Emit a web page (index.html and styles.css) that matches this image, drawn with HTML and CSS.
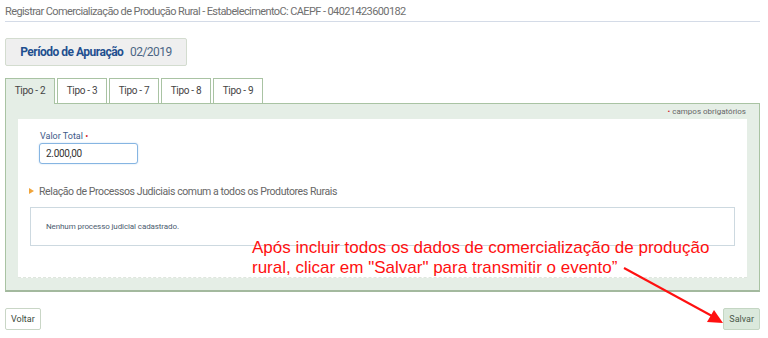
FILE: index.html
```html
<!DOCTYPE html>
<html lang="pt-BR">
<head>
  <meta charset="UTF-8">
  <title>Registrar Comercialização de Produção Rural</title>
  <link rel="stylesheet" href="styles.css">
</head>
<body>
  <div class="page">
    <div class="page-title">Registrar Comercialização de Produção Rural - EstabelecimentoC: CAEPF - 04021423600182</div>

    <div class="periodo">
      <span class="periodo-label">Período de Apuração</span>
      <span class="periodo-valor">02/2019</span>
    </div>

    <ul class="tabs">
      <li class="tab active">Tipo - 2</li>
      <li class="tab">Tipo - 3</li>
      <li class="tab">Tipo - 7</li>
      <li class="tab">Tipo - 8</li>
      <li class="tab">Tipo - 9</li>
    </ul>

    <div class="panel">
      <div class="obrigatorios"><span class="req">•</span> campos obrigatórios</div>
      <div class="panel-body">
        <label class="field-label">Valor Total <span class="req">•</span></label>
        <input class="field-input" type="text" value="2.000,00">

        <div class="section-title"><span class="arrow-right"></span>Relação de Processos Judiciais comum a todos os Produtores Rurais</div>
        <div class="empty-box">Nenhum processo judicial cadastrado.</div>
      </div>
    </div>

    <div class="actions">
      <button class="btn">Voltar</button>
      <button class="btn btn-save">Salvar</button>
    </div>
  </div>

  <div class="note">Após incluir todos os dados de comercialização de produção<br>rural, clicar em "Salvar" para transmitir o evento”</div>
  <svg class="note-arrow" width="768" height="338" viewBox="0 0 768 338">
    <line x1="624" y1="268" x2="712" y2="316" stroke="#ff1010" stroke-width="2"/>
    <polygon points="723,323 707,322 714,310" fill="#ff1010"/>
  </svg>
</body>
</html>
```

FILE: styles.css
```css
body {
  margin: 0;
  font-family: Roboto, "Liberation Sans", sans-serif;
  background: #fff;
  color: #555;
}

.page {
  width: 755px;
  padding-left: 5px;
}

.page-title {
  height: 21px;
  line-height: 23px;
  font-size: 11px;
  letter-spacing: -0.6px;
  color: #6f6f6f;
  border-bottom: 1px solid #d4dbe7;
  white-space: nowrap;
}

.periodo {
  margin-top: 16px;
  width: 180px;
  height: 26px;
  line-height: 26px;
  text-align: center;
  background: #efefef;
  border: 1px solid #d3dccf;
  border-radius: 2px;
  font-size: 12px;
  letter-spacing: -0.5px;
}

.periodo-label {
  color: #1f4f8f;
  font-weight: bold;
}

.periodo-valor {
  color: #4b6584;
  margin-left: 4px;
}

.tabs {
  list-style: none;
  margin: 12px 0 0;
  padding: 0;
  display: flex;
  gap: 2px;
}

.tab {
  width: 48px;
  height: 24px;
  line-height: 24px;
  text-align: center;
  font-size: 10px;
  letter-spacing: -0.3px;
  color: #444;
  background: #fff;
  border: 1px solid #a9c3a3;
  border-bottom: none;
}

.tab.active {
  background: #e5eee6;
  position: relative;
  z-index: 1;
  height: 25px;
  margin-bottom: -1px;
}

.panel {
  background: #e5eee6;
  border: 1px solid #a9c3a3;
  border-bottom: 2px solid #a3b99e;
  padding: 0 12px 12px;
}

.obrigatorios {
  height: 15px;
  line-height: 16px;
  text-align: right;
  font-size: 8px;
  color: #666;
  margin-right: -12px;
  padding-right: 13px;
}

.req {
  color: #d0282c;
}

.panel-body {
  background: #fff;
  height: 139px;
  padding: 12px 12px 7px 21px;
  border-bottom: 1px dashed #dfe6de;
}

.field-label {
  display: block;
  font-size: 9px;
  color: #3e5a87;
  height: 12px;
  margin-left: 1px;
}

.field-input {
  display: block;
  box-sizing: border-box;
  width: 99px;
  height: 21px;
  margin-top: 0;
  padding: 0 6px;
  font-family: inherit;
  font-size: 10px;
  letter-spacing: -0.3px;
  color: #333;
  border: 1px solid #86b5e2;
  border-radius: 3px;
  box-shadow: 0 0 2px #c6dcf2;
  outline: none;
}

.section-title {
  margin: 20px 0 0 -10px;
  font-size: 10.5px;
  letter-spacing: -0.4px;
  color: #666;
  display: flex;
  align-items: center;
  height: 14px;
}

.arrow-right {
  width: 0;
  height: 0;
  border-top: 3px solid transparent;
  border-bottom: 3px solid transparent;
  border-left: 5px solid #f0a43a;
  margin-right: 5px;
}

.empty-box {
  margin: 9px 0 0 -9px;
  width: 688px;
  height: 37px;
  line-height: 37px;
  padding-left: 15px;
  font-size: 8px;
  letter-spacing: -0.1px;
  color: #4c5d70;
  border: 1px solid #cdd9e0;
}

.actions {
  display: flex;
  justify-content: space-between;
  margin-top: 16px;
}

.btn {
  height: 22px;
  padding: 0 5px;
  font-family: inherit;
  font-size: 9px;
  color: #3c4a3c;
  background: #fff;
  border: 1px solid #c9d6c6;
  border-radius: 2px;
}

.btn-save {
  background: #dbe9dc;
  border-color: #c4d6c3;
  color: #4a5a4a;
}

.note {
  position: absolute;
  left: 252px;
  top: 238px;
  font-family: "Liberation Sans", Arial, sans-serif;
  font-size: 17px;
  line-height: 20px;
  color: #ff1010;
  white-space: nowrap;
}

.note-arrow {
  position: absolute;
  left: 0;
  top: 0;
  pointer-events: none;
}
```
